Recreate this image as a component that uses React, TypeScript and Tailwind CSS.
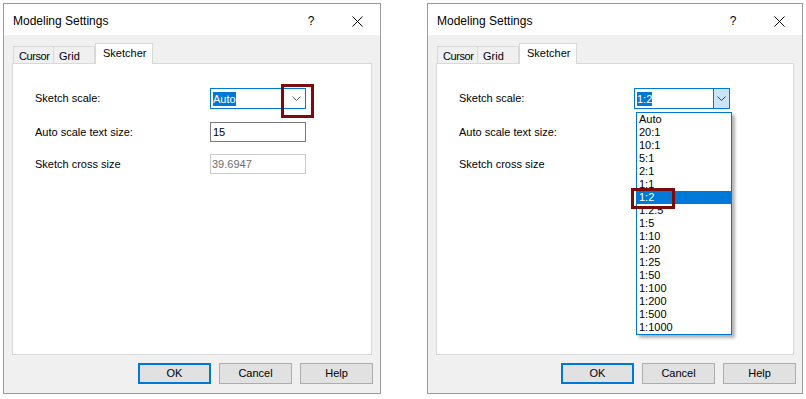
import React from "react";

const Chevron = ({ color = "#606060" }: { color?: string }) => (
  <svg width="9" height="5" viewBox="0 0 9 5">
    <polyline points="0.5,0.5 4.5,4.5 8.5,0.5" fill="none" stroke={color} strokeWidth="1" />
  </svg>
);

const CloseIcon = () => (
  <svg width="11" height="11" viewBox="0 0 11 11">
    <line x1="0.5" y1="0.5" x2="10.5" y2="10.5" stroke="#000" strokeWidth="1" />
    <line x1="10.5" y1="0.5" x2="0.5" y2="10.5" stroke="#000" strokeWidth="1" />
  </svg>
);

const items = ["Auto", "20:1", "10:1", "5:1", "2:1", "1:1", "1:2", "1:2.5", "1:5", "1:10", "1:20", "1:25", "1:50", "1:100", "1:200", "1:500", "1:1000"];

function Dialog({ dropped }: { dropped: boolean }) {
  return (
    <div
      className={
        (dropped ? "w-[376px]" : "w-[378px]") +
        " h-[391px] border border-[#9a9a9a] bg-[#f0f0f0] flex flex-col shrink-0"
      }
    >
      {/* title bar */}
      <div className="h-[31px] bg-white flex items-center pt-[4px] pl-[9px] pr-[13px] text-[12px] leading-[15px] text-black">
        <span>Modeling Settings</span>
        <span className="ml-auto w-[20px] text-center">?</span>
        <span className="ml-[26px] w-[20px] flex justify-center">
          <CloseIcon />
        </span>
      </div>

      {/* tabs */}
      <div className="mt-[8px] mx-[8px] flex items-end h-[20px] pl-[1px] text-[11px] leading-[13px]">
        <div className="w-[41px] h-[17px] border border-b-0 border-[#d9d9d9] bg-[#f0f0f0] pl-[5px] pt-[3px] tracking-[-0.4px]">Cursor</div>
        <div className="w-[41px] h-[17px] border border-l-0 border-b-0 border-[#d9d9d9] bg-[#f0f0f0] pl-[5px] pt-[3px]">Grid</div>
        <div className="relative z-10 -mb-px w-[58px] h-[21px] border border-b-0 border-[#d9d9d9] bg-white pl-[7px] pt-[3px]">Sketcher</div>
      </div>

      {/* panel */}
      <div className="mx-[8px] h-[292px] bg-white border border-[#d9d9d9] pt-[24px] pl-[22px] text-[11px] leading-[13px] text-black">
        <div className="flex items-center h-[21px]">
          <div className="w-[175px]">Sketch scale:</div>
          <div className="relative w-[96px] h-[21px] border border-[#0078d7] bg-white flex items-center">
            <span className="ml-[2px] bg-[#0078d7] text-white leading-[14px]">{dropped ? "1:2" : "Auto"}</span>
            {dropped ? (
              <div className="ml-auto w-[16px] h-full border-l border-[#0078d7] bg-[#cce4f7] flex items-center justify-center">
                <Chevron color="#404040" />
              </div>
            ) : (
              <div className="ml-auto w-[17px] h-full flex items-center justify-center">
                <Chevron />
              </div>
            )}
            {!dropped && (
              <div className="absolute left-[70px] top-[-5px] w-[33px] h-[34px] border-[3px] border-[#7b0a0a]" />
            )}
            {dropped && (
              <div className="absolute z-20 left-[1px] top-[23px] w-[96px] h-[223px] border border-[#0078d7] bg-white shadow-[3px_3px_3px_rgba(0,0,0,0.3)] flex flex-col">
                {items.map((it) => (
                  <div
                    key={it}
                    className={
                      "h-[13px] leading-[13px] pl-[2px] " +
                      (it === "1:2" ? "bg-[#0078d7] text-white" : "text-black")
                    }
                  >
                    {it}
                  </div>
                ))}
                <div className="absolute left-[-6px] top-[75px] w-[44px] h-[21px] border-[3px] border-[#7b0a0a]" />
              </div>
            )}
          </div>
        </div>
        <div className="flex items-center h-[20px] mt-[13px]">
          <div className="w-[175px]">Auto scale text size:</div>
          {!dropped && (
            <div className="w-[96px] h-[20px] border border-[#7a7a7a] bg-white flex items-center pl-[2px]">15</div>
          )}
        </div>
        <div className="flex items-center h-[20px] mt-[12px]">
          <div className="w-[175px]">Sketch cross size</div>
          {!dropped && (
            <div className="w-[96px] h-[20px] border border-[#cccccc] bg-white flex items-center pl-[1px] text-[#6d6d6d]">39.6947</div>
          )}
        </div>
      </div>

      {/* buttons */}
      <div className={"mt-[8px] flex justify-end gap-[8px] text-[11px] leading-[13px] text-black " + (dropped ? "pr-[6px]" : "pr-[7px]")}>
        <div className="w-[73px] h-[21px] border-2 border-[#0078d7] bg-[#e1e1e1] flex items-center justify-center">OK</div>
        <div className="w-[73px] h-[21px] border border-[#adadad] bg-[#e1e1e1] flex items-center justify-center">Cancel</div>
        <div className="w-[73px] h-[21px] border border-[#adadad] bg-[#e1e1e1] flex items-center justify-center">Help</div>
      </div>
    </div>
  );
}

export default function App() {
  return (
    <div
      className="w-[806px] h-[399px] bg-white flex items-start pt-[3px] pl-[3px] gap-[46px] overflow-hidden"
      style={{ fontFamily: '"Liberation Sans", Arial, sans-serif' }}
    >
      <Dialog dropped={false} />
      <Dialog dropped={true} />
    </div>
  );
}
